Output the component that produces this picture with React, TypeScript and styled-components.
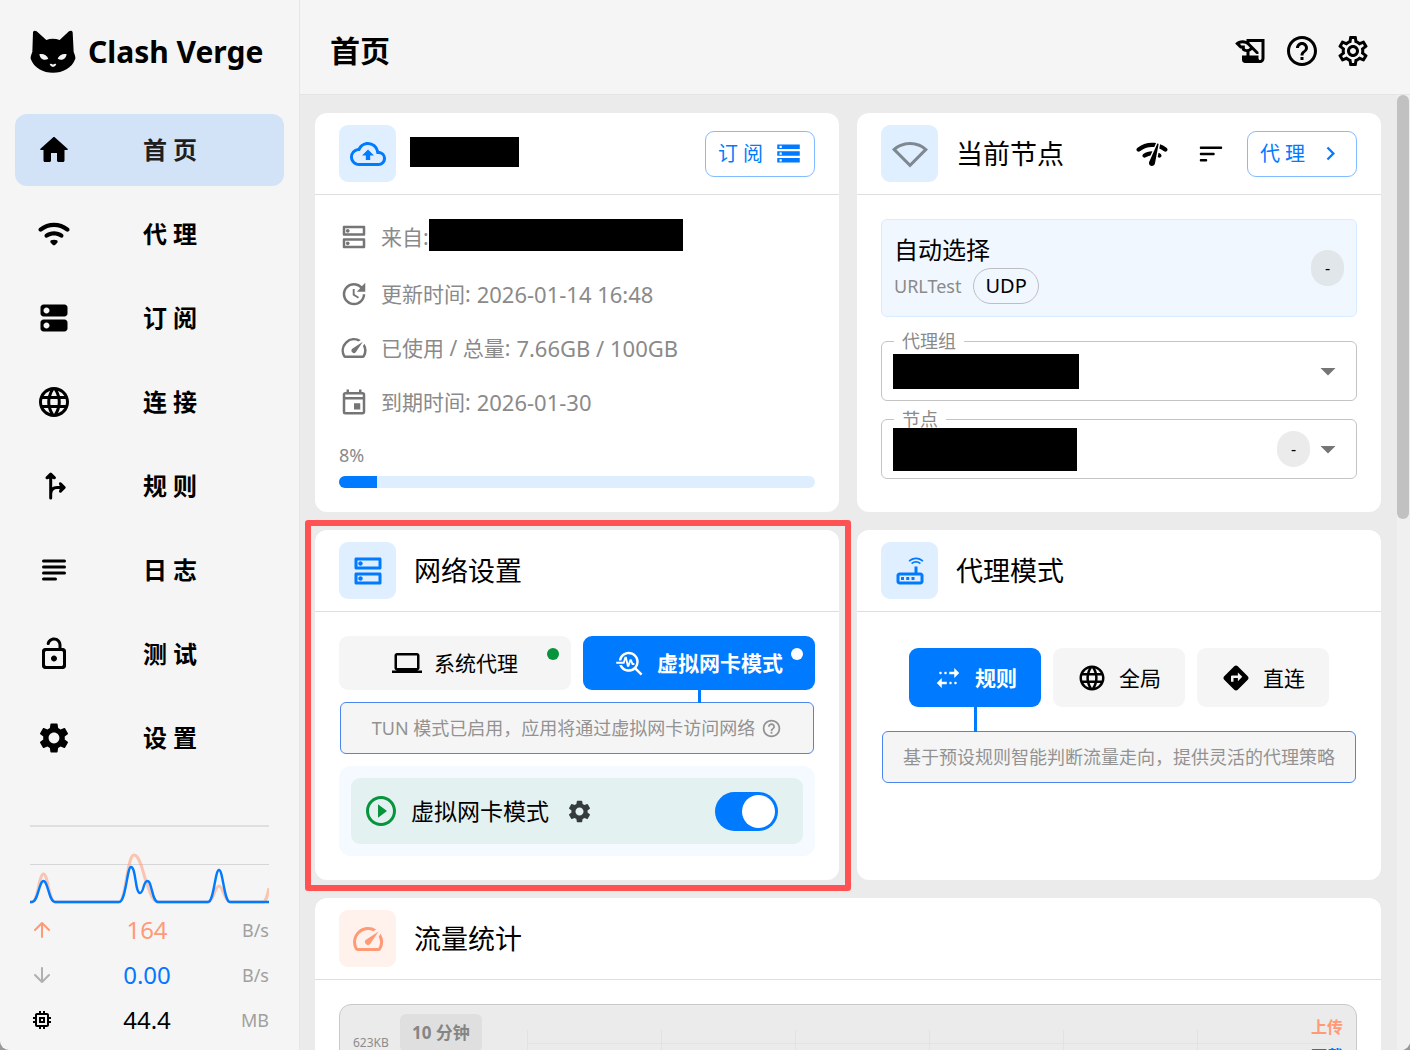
import React from "react";
import styled, { createGlobalStyle, css } from "styled-components";
import {
  MdArrowDropDown,
  MdChevronRight,
  MdDirections,
  MdHelpOutline,
  MdLanguage,
  MdMultipleStop,
  MdOutlineCloudUpload,
  MdOutlineDns,
  MdOutlineEvent,
  MdOutlineLaptop,
  MdOutlineMemory,
  MdOutlineRouter,
  MdOutlineSettings,
  MdPlayCircleOutline,
  MdSettings,
  MdSignalWifi0Bar,
  MdSpeed,
  MdStorage,
  MdTroubleshoot,
  MdUpdate,
} from "react-icons/md";

const color = {
  primary: "#007aff",
  upload: "#ff9a76",
  success: "#06943d",
  text: "#000000",
  muted: "#8a8a8a",
  panel: "#f5f5f5",
  page: "#ebebeb",
  divider: "#dedede",
};

const GlobalStyle = createGlobalStyle`
  *, *::before, *::after { box-sizing: border-box; }
  body {
    margin: 0;
    background: #9a9a9a;
    color: ${color.text};
    font-family: "Noto Sans", "Noto Sans CJK SC", sans-serif;
    font-size: 21px;
    line-height: 30px;
  }
  button, select, input { font: inherit; color: inherit; }
  button { cursor: pointer; }
  h1, h2, p, ul { margin: 0; padding: 0; }
  svg { display: block; flex-shrink: 0; }
`;

/* ---------- icons ---------- */

const Glyph = ({ size, d }: { size: number; d: string }) => (
  <svg width={size} height={size} viewBox="0 0 24 24" fill="currentColor" aria-hidden="true">
    <path d={d} />
  </svg>
);

const HomeIcon = () => (
  <Glyph
    size={36}
    d="M10 19v-5h4v5c0 .55.45 1 1 1h3c.55 0 1-.45 1-1v-7h1.7c.46 0 .68-.57.33-.87L12.67 3.6c-.38-.34-.96-.34-1.34 0l-8.36 7.53c-.34.3-.13.87.33.87H5v7c0 .55.45 1 1 1h3c.55 0 1-.45 1-1"
  />
);
const WifiIcon = () => (
  <Glyph
    size={36}
    d="M2.06 10.06c.51.51 1.32.56 1.87.1 4.67-3.84 11.45-3.84 16.13-.01.56.46 1.38.42 1.89-.09.59-.59.55-1.57-.1-2.1-5.71-4.67-13.97-4.67-19.69 0-.65.52-.7 1.5-.1 2.1m7.76 7.76 1.47 1.47c.39.39 1.02.39 1.41 0l1.47-1.47c.47-.47.37-1.28-.23-1.59-1.22-.63-2.68-.63-3.91 0-.57.31-.68 1.12-.21 1.59m-3.73-3.73c.49.49 1.26.54 1.83.13 2.44-1.73 5.72-1.73 8.16 0 .57.4 1.34.36 1.83-.13l.01-.01c.6-.6.56-1.62-.13-2.11-3.44-2.49-8.13-2.49-11.58 0-.69.5-.73 1.51-.12 2.12"
  />
);
const ServersIcon = () => (
  <Glyph
    size={36}
    d="M19 13H5c-1.1 0-2 .9-2 2v4c0 1.1.9 2 2 2h14c1.1 0 2-.9 2-2v-4c0-1.1-.9-2-2-2M7 19c-1.1 0-2-.9-2-2s.9-2 2-2 2 .9 2 2-.9 2-2 2M19 3H5c-1.1 0-2 .9-2 2v4c0 1.1.9 2 2 2h14c1.1 0 2-.9 2-2V5c0-1.1-.9-2-2-2M7 9c-1.1 0-2-.9-2-2s.9-2 2-2 2 .9 2 2-.9 2-2 2"
  />
);
const UnlockIcon = () => (
  <Glyph
    size={36}
    d="M18 8h-1V6c0-2.76-2.24-5-5-5-2.28 0-4.27 1.54-4.84 3.75-.14.54.18 1.08.72 1.22.53.14 1.08-.18 1.22-.72C9.44 3.93 10.63 3 12 3c1.65 0 3 1.35 3 3v2H6c-1.1 0-2 .9-2 2v10c0 1.1.9 2 2 2h12c1.1 0 2-.9 2-2V10c0-1.1-.9-2-2-2m0 11c0 .55-.45 1-1 1H7c-.55 0-1-.45-1-1v-8c0-.55.45-1 1-1h10c.55 0 1 .45 1 1zm-6-2c1.1 0 2-.9 2-2s-.9-2-2-2-2 .9-2 2 .9 2 2 2"
  />
);
const QuillIcon = () => (
  <Glyph
    size={36}
    d="M9 4v1.38c-.83-.33-1.72-.5-2.61-.5-1.79 0-3.58.68-4.95 2.05l3.33 3.33h1.11v1.11c.86.86 1.98 1.31 3.11 1.36V15H6v3c0 1.100.9 2 2 2h10c1.660 0 3-1.340 3-3V4zm-1.110 6.410V8.260H5.610L4.570 7.220a5.070 5.070 0 0 1 1.820-.34c1.340 0 2.590.52 3.540 1.460l1.410 1.410-.2.2c-.51.51-1.190.8-1.920.8-.47 0-.93-.12-1.330-.34M19 17c0 .55-.45 1-1 1s-1-.45-1-1v-2h-6v-2.590c.57-.23 1.100-.57 1.560-1.030l.2-.2L15.590 14H17v-1.410l-6-5.970V6h8z"
  />
);
const NetworkCheckIcon = () => (
  <Glyph
    size={36}
    d="M15.9 5c-.17 0-.32.09-.41.23l-.07.15-5.18 11.65c-.16.29-.26.61-.26.96 0 1.11.9 2.01 2.01 2.01.96 0 1.77-.68 1.96-1.59l.01-.03L16.4 5.5c0-.28-.22-.5-.5-.5M2.06 10.06c.51.51 1.33.55 1.89.09 2.76-2.26 6.24-3.18 9.58-2.76l1.19-2.68c-4.35-.78-8.96.3-12.57 3.25-.64.53-.68 1.51-.09 2.1m19.88 0c.59-.59.55-1.57-.1-2.1-1.36-1.11-2.86-1.95-4.44-2.53l-.53 2.82c1.13.47 2.19 1.09 3.17 1.89.58.46 1.39.43 1.9-.08m-4.01 4.01c.6-.6.56-1.62-.13-2.12-.46-.33-.95-.61-1.44-.86l-.55 2.92c.11.07.22.14.32.22.57.4 1.33.32 1.8-.16m-11.86 0c.47.47 1.2.54 1.77.16.98-.65 2.05-1.06 3.16-1.22l1.28-2.88c-2.13-.06-4.28.54-6.09 1.84-.69.51-.74 1.53-.12 2.1"
  />
);
const SortIcon = () => (
  <Glyph
    size={30}
    d="M4 18h4c.55 0 1-.45 1-1s-.45-1-1-1H4c-.55 0-1 .45-1 1s.45 1 1 1M3 7c0 .55.45 1 1 1h16c.55 0 1-.45 1-1s-.45-1-1-1H4c-.55 0-1 .45-1 1m1 6h10c.55 0 1-.45 1-1s-.45-1-1-1H4c-.55 0-1 .45-1 1s.45 1 1 1"
  />
);

const LineGlyph = ({ size, d }: { size: number; d: string }) => (
  <svg
    width={size}
    height={size}
    viewBox="0 0 24 24"
    fill="none"
    stroke="currentColor"
    strokeWidth={2}
    strokeLinecap="round"
    strokeLinejoin="round"
    aria-hidden="true"
  >
    <path d={d} />
  </svg>
);
const ForkIcon = () => (
  <LineGlyph
    size={36}
    d="M9.8 20V5M7.300 6.500l2.500-2.500 2.500 2.500-2.500-1zM9.8 17c.3-2.800 1.800-4 4.200-4H18M16.300 10.500l2.500 2.500-2.500 2.500 1-2.500z"
  />
);
const LinesIcon = () => <LineGlyph size={36} d="M5 6h14M5 10h14M5 14h14M5 18h8" />;
const ArrowUpIcon = () => <LineGlyph size={24} d="M12 19V5M5 12l7-7 7 7" />;
const ArrowDownIcon = () => <LineGlyph size={24} d="M12 5v14M5 12l7 7 7-7" />;

const CatLogo = () => (
  <svg width="46" height="44" viewBox="90 94 138 132" aria-hidden="true">
    <path d="M99 101Q101 94 110 98L139 124Q158 116 179 124L207 98Q216 94 218 101L221 160Q227 174 226 180C216 208 188 222 159 222S102 208 92 180Q91 174 97 160Z" />
    <path
      fill="#f5f5f5"
      d="M118 167C128 164 141 169 145 180C136 187 121 184 118 167ZM200 167C190 164 177 169 173 180C182 187 197 184 200 167ZM149 196Q154 193 159 198Q164 193 169 196Q167 204 159 205Q151 204 149 196Z"
    />
  </svg>
);

/* ---------- shell ---------- */

const Shell = styled.div`
  display: grid;
  grid-template-columns: 300px minmax(0, 1fr);
  height: 100vh;
  overflow: hidden;
  background: ${color.panel};
  border-radius: 0 0 9px 9px;
`;

const Sidebar = styled.aside`
  display: flex;
  flex-direction: column;
  border-right: 1px solid #e6e6e6;
  min-height: 0;
`;

const Brand = styled.div`
  display: flex;
  align-items: center;
  gap: 12px;
  height: 114px;
  padding: 0 30px 10px;
  font-size: 30px;
  line-height: 42px;
  font-weight: 700;
  white-space: nowrap;
`;

const NavList = styled.ul`
  display: grid;
  gap: 12px;
  padding: 0 15px;
  list-style: none;
`;

const NavLink = styled.a<{ $active?: boolean }>`
  display: flex;
  align-items: center;
  height: 72px;
  padding: 0 16px 0 21px;
  border-radius: 12px;
  background: ${(p) => (p.$active ? "#d2e3f8" : "transparent")};
  color: ${(p) => (p.$active ? "#1f1f1f" : color.text)};
  font-size: 24px;
  line-height: 32px;
  font-weight: 700;
  text-decoration: none;
  svg { color: ${color.text}; }
`;

const NavText = styled.span`
  flex: 1;
  text-align: center;
`;

const Traffic = styled.section`
  margin-top: auto;
  padding: 0 30px 8px;
`;

const TrafficGraph = styled.svg`
  width: 100%;
  height: 82px;
`;

const Stat = styled.div<{ $tone: string; $icon?: string }>`
  display: grid;
  grid-template-columns: 24px 1fr 29px;
  align-items: center;
  height: 45px;
  color: ${(p) => p.$tone};
  font-size: 24px;
  text-align: center;
  svg { color: ${(p) => p.$icon ?? p.$tone}; }
`;

const Unit = styled.span`
  color: #a0a0a0;
  font-size: 18px;
  text-align: right;
`;

const Main = styled.main`
  display: flex;
  flex-direction: column;
  min-width: 0;
  min-height: 0;
`;

const TopBar = styled.header`
  display: flex;
  align-items: center;
  justify-content: space-between;
  flex-shrink: 0;
  height: 95px;
  padding: 8px 39px 0 30px;
  border-bottom: 1px solid #e4e4e4;
`;

const PageTitle = styled.h1`
  font-size: 30px;
  line-height: 42px;
  font-weight: 700;
`;

const IconRow = styled.div<{ $gap: number }>`
  display: flex;
  align-items: center;
  gap: ${(p) => p.$gap}px;
`;

const IconButton = styled.button`
  display: grid;
  place-items: center;
  padding: 0;
  border: 0;
  background: none;
`;

const Viewport = styled.div`
  display: flex;
  flex: 1;
  min-height: 0;
  overflow: hidden;
  background: ${color.page};
`;

const Board = styled.div`
  display: grid;
  flex: 1;
  grid-template-columns: repeat(2, minmax(0, 1fr));
  align-content: start;
  gap: 18px;
  min-width: 0;
  padding: 18px 16px 18px 15px;
`;

const ScrollTrack = styled.div`
  flex: 0 0 13px;
  padding-right: 1px;
  background: #f0f0f0;
`;

const ScrollThumb = styled.div`
  height: 424px;
  border-radius: 6px;
  background: #c1c1c1;
`;

/* ---------- cards ---------- */

const Card = styled.section<{ $wide?: boolean }>`
  position: relative;
  grid-column: ${(p) => (p.$wide ? "1 / -1" : "auto")};
  border-radius: 12px;
  background: #ffffff;
`;

const CardHead = styled.div`
  display: flex;
  align-items: center;
  gap: 18px;
  height: 82px;
  padding: 0 24px;
  border-bottom: 1px solid ${color.divider};
`;

const Badge = styled.div<{ $tone?: "upload" | "idle" }>`
  display: grid;
  place-items: center;
  flex-shrink: 0;
  width: 57px;
  height: 57px;
  border-radius: 9px;
  background: ${(p) => (p.$tone === "upload" ? "#fff1ec" : "#e0efff")};
  color: ${(p) => (p.$tone === "upload" ? color.upload : p.$tone === "idle" ? "#7f8791" : color.primary)};
`;

const CardTitle = styled.h2`
  flex: 1;
  font-size: 27px;
  line-height: 36px;
  font-weight: 400;
`;

const CardBody = styled.div<{ $top?: number }>`
  padding: ${(p) => p.$top ?? 24}px 24px 24px;
`;

const Redacted = styled.span<{ $w: number; $h: number }>`
  position: relative;
  display: block;
  width: ${(p) => p.$w}px;
  height: ${(p) => p.$h}px;
  background: #000000;
`;

const HeadSlot = styled.div`
  flex: 1;
  margin: 0 0 3px -4px;
`;

const OutlineButton = styled.button`
  display: flex;
  align-items: center;
  justify-content: center;
  gap: 12px;
  width: 110px;
  height: 46px;
  padding: 0;
  border: 1px solid #80bcff;
  border-radius: 9px;
  background: #ffffff;
  color: ${color.primary};
  font-size: 20px;
  white-space: nowrap;
`;

const InfoList = styled.div`
  display: grid;
  gap: 24px;
  color: ${color.muted};
`;

const InfoRow = styled.div<{ $tall?: boolean }>`
  display: flex;
  align-items: center;
  height: ${(p) => (p.$tall ? 36 : 30)}px;
  white-space: nowrap;
  svg {
    margin-right: 12px;
    color: #757575;
  }
  ${Redacted} { align-self: flex-start; }
`;

const InfoValue = styled.span`
  margin-left: 6px;
  font-size: 22px;
`;

const Usage = styled.div`
  display: grid;
  gap: 6px;
  font-size: 18px;
  line-height: 29px;
`;

const Meter = styled.div`
  height: 12px;
  border-radius: 6px;
  background: #deeeff;
  overflow: hidden;
`;

const MeterFill = styled.div`
  height: 100%;
  background: ${color.primary};
`;

/* ---------- current node ---------- */

const NodeBox = styled.div`
  display: flex;
  align-items: center;
  justify-content: space-between;
  margin-bottom: 24px;
  padding: 12px;
  border: 1px solid #d9ebff;
  border-radius: 6px;
  background: #f1f7ff;
`;

const NodeName = styled.p`
  font-size: 24px;
  line-height: 36px;
`;

const NodeMeta = styled.div`
  display: flex;
  align-items: center;
  gap: 12px;
  color: ${color.muted};
  font-size: 18px;
`;

const Pill = styled.span`
  height: 36px;
  padding: 0 11px;
  border: 1px solid #bdbdc4;
  border-radius: 18px;
  color: ${color.text};
  font-size: 20px;
  line-height: 34px;
`;

const Delay = styled.span<{ $bg: string }>`
  width: 33px;
  height: 36px;
  border-radius: 17px;
  background: ${(p) => p.$bg};
  color: ${color.text};
  font-size: 16px;
  line-height: 36px;
  text-align: center;
`;

const Field = styled.div`
  position: relative;
  display: flex;
  align-items: center;
  height: 60px;
  margin-bottom: 18px;
  padding: 0 10px 0 11px;
  border: 1px solid #c4c4c4;
  border-radius: 6px;
  &:last-child { margin-bottom: 8px; }
  svg { color: #757575; }
`;

const FieldLabel = styled.label`
  position: absolute;
  top: -13px;
  left: 12px;
  padding: 0 8px;
  background: #ffffff;
  color: ${color.muted};
  font-size: 18px;
  line-height: 24px;
`;

const FieldSelect = styled.select`
  position: absolute;
  inset: 0;
  width: 100%;
  border: 0;
  background: transparent;
  appearance: none;
`;

const FieldSpace = styled.span`
  flex: 1;
`;

/* ---------- toggles ---------- */

const Toggles = styled.div<{ $cols: string }>`
  display: grid;
  grid-template-columns: ${(p) => p.$cols};
  justify-content: center;
  gap: 12px;
`;

const Toggle = styled.button<{ $h: number; $link?: number }>`
  position: relative;
  display: flex;
  align-items: center;
  justify-content: center;
  gap: 12px;
  height: ${(p) => p.$h}px;
  padding: 0;
  border: 0;
  border-radius: 9px;
  background: ${color.panel};
  white-space: nowrap;
  ${(p) =>
    p.$link &&
    css`
      background: ${color.primary};
      color: #ffffff;
      font-weight: 700;
      &::after {
        content: "";
        position: absolute;
        z-index: 1;
        top: 100%;
        left: 50%;
        width: 3px;
        height: ${p.$link}px;
        margin-left: -1px;
        background: ${color.primary};
      }
    `}
`;

const StatusDot = styled.span<{ $tone: string }>`
  position: absolute;
  top: 12px;
  right: 12px;
  width: 12px;
  height: 12px;
  border-radius: 50%;
  background: ${(p) => p.$tone};
`;

const Hint = styled.div<{ $top: number }>`
  display: flex;
  align-items: center;
  justify-content: center;
  gap: 6px;
  height: 52px;
  margin: ${(p) => p.$top}px 1px 0;
  border: 1px solid #4a86ee;
  border-radius: 6px;
  background: ${color.panel};
  color: #929292;
  font-size: 18px;
  white-space: nowrap;
`;

const SwitchFrame = styled.div`
  margin-top: 12px;
  padding: 12px;
  border-radius: 12px;
  background: #f4faff;
`;

const SwitchRow = styled.div`
  display: flex;
  align-items: center;
  height: 66px;
  padding: 0 25px 0 12px;
  border-radius: 9px;
  background: #e3f1f1;
`;

const PlayMark = styled.span`
  margin-right: 12px;
  color: ${color.success};
`;

const SwitchLabel = styled.label`
  margin-right: 17px;
  font-size: 23px;
`;

const GearButton = styled(IconButton)`
  margin-right: auto;
  color: #353c3d;
`;

const Switch = styled.input`
  appearance: none;
  width: 63px;
  height: 39px;
  margin: 0;
  padding: 3px;
  border-radius: 20px;
  background: #c4c4c4;
  &::before {
    content: "";
    display: block;
    width: 33px;
    height: 33px;
    border-radius: 50%;
    background: #ffffff;
  }
  &:checked { background: ${color.primary}; }
  &:checked::before { margin-left: auto; }
`;

const Highlight = styled.div`
  position: absolute;
  inset: -10px -12px -11px -10px;
  border: 6px solid #ff5252;
  border-radius: 3px;
  pointer-events: none;
`;

/* ---------- traffic chart ---------- */

const Chart = styled.div`
  display: flex;
  height: 190px;
  padding: 9px 13px;
  border: 1px solid #c9c9c9;
  border-radius: 12px;
  background: #ebebeb;
`;

const AxisLabel = styled.span`
  width: 47px;
  padding-top: 20px;
  color: #8c8c8c;
  font-size: 12px;
  line-height: 18px;
`;

const RangeButton = styled.button`
  height: 38px;
  padding: 0 12px;
  border: 0;
  border-radius: 6px;
  background: #dfdfdf;
  color: #858585;
  font-size: 17px;
  font-weight: 700;
`;

const Grid = styled.div`
  display: grid;
  flex: 1;
  grid-template-columns: repeat(6, 1fr);
  margin: 16px -20px 0 45px;
`;

const GridCell = styled.span`
  border-left: 1px solid #e2e2e2;
  background: linear-gradient(#e4e4e4, #e4e4e4) 0 13px / 100% 1px no-repeat;
`;

const Legend = styled.div`
  display: grid;
  align-content: start;
  gap: 3px;
  color: ${color.upload};
  font-size: 16px;
  line-height: 26px;
  font-weight: 700;
`;

const LegendItem = styled.span<{ $tone: string }>`
  color: ${(p) => p.$tone};
`;

/* ---------- data ---------- */

const nav = [
  { label: "首 页", icon: <HomeIcon />, active: true },
  { label: "代 理", icon: <WifiIcon /> },
  { label: "订 阅", icon: <ServersIcon /> },
  { label: "连 接", icon: <MdLanguage size={36} /> },
  { label: "规 则", icon: <ForkIcon /> },
  { label: "日 志", icon: <LinesIcon /> },
  { label: "测 试", icon: <UnlockIcon /> },
  { label: "设 置", icon: <MdSettings size={36} /> },
];

const stats = [
  { icon: <ArrowUpIcon />, value: "164", unit: "B/s", tone: color.upload },
  { icon: <ArrowDownIcon />, value: "0.00", unit: "B/s", tone: color.primary, iconTone: "#b0b0b0" },
  { icon: <MdOutlineMemory size={24} />, value: "44.4", unit: "MB", tone: color.text },
];

const info = [
  { icon: <MdUpdate size={30} />, label: "更新时间:", value: "2026-01-14 16:48" },
  { icon: <MdSpeed size={30} />, label: "已使用 / 总量:", value: "7.66GB / 100GB" },
  { icon: <MdOutlineEvent size={30} />, label: "到期时间:", value: "2026-01-30" },
];

const usedPercent = 8;

export default function App() {
  return (
    <>
      <GlobalStyle />
      <Shell>
        <Sidebar>
          <Brand>
            <CatLogo />
            Clash Verge
          </Brand>
          <nav>
            <NavList>
              {nav.map((item) => (
                <li key={item.label}>
                  <NavLink href="#" $active={item.active}>
                    {item.icon}
                    <NavText>{item.label}</NavText>
                  </NavLink>
                </li>
              ))}
            </NavList>
          </nav>
          <Traffic>
            <TrafficGraph viewBox="0 0 239 82" preserveAspectRatio="none" fill="none" aria-hidden="true">
              <path d="M0 1h239" stroke="#dfdfdf" strokeWidth="2" />
              <path d="M0 39.5h239" stroke="#d6d6d6" />
              <path
                stroke={color.upload}
                strokeOpacity="0.55"
                strokeWidth="3"
                d="M0 77H2C8 77 9 49 13.5 49S19 77 25 77H89C96 77 97 30 104 30C110 30 113 48 116 56C119 64 122 77 128 77H178C183 77 185 61 189 61S195 77 200 77H233C236 77 237 72 239 63"
              />
              <path
                stroke={color.primary}
                strokeWidth="2.4"
                d="M0 77H2C8 77 9 56 13.5 56S19 77 25 77H89C96 77 97 42 101 42C106 42 105 68 110 68C114 68 113 56 117.5 56C122 56 122 77 128 77H178C184 77 185 45 189 45S194 77 200 77H239"
              />
            </TrafficGraph>
            {stats.map((s) => (
              <Stat key={s.value} $tone={s.tone} $icon={s.iconTone}>
                {s.icon}
                <span>{s.value}</span>
                <Unit>{s.unit}</Unit>
              </Stat>
            ))}
          </Traffic>
        </Sidebar>

        <Main>
          <TopBar>
            <PageTitle>首页</PageTitle>
            <IconRow $gap={15}>
              <IconButton aria-label="轻量模式"><QuillIcon /></IconButton>
              <IconButton aria-label="帮助"><MdHelpOutline size={36} /></IconButton>
              <IconButton aria-label="首页设置"><MdOutlineSettings size={36} /></IconButton>
            </IconRow>
          </TopBar>

          <Viewport>
            <Board>
              <Card>
                <CardHead>
                  <Badge><MdOutlineCloudUpload size={36} /></Badge>
                  <HeadSlot><Redacted $w={109} $h={30} /></HeadSlot>
                  <OutlineButton>订 阅<MdStorage size={27} /></OutlineButton>
                </CardHead>
                <CardBody>
                  <InfoList>
                    <InfoRow $tall>
                      <MdOutlineDns size={30} />
                      <span>来自:</span>
                      <Redacted $w={254} $h={32} />
                    </InfoRow>
                    {info.map((row) => (
                      <InfoRow key={row.label}>
                        {row.icon}
                        <span>{row.label}</span>
                        <InfoValue>{row.value}</InfoValue>
                      </InfoRow>
                    ))}
                    <Usage>
                      <span>{usedPercent}%</span>
                      <Meter role="progressbar" aria-valuenow={usedPercent}>
                        <MeterFill style={{ width: `${usedPercent}%` }} />
                      </Meter>
                    </Usage>
                  </InfoList>
                </CardBody>
              </Card>

              <Card>
                <CardHead>
                  <Badge $tone="idle"><MdSignalWifi0Bar size={36} /></Badge>
                  <CardTitle>当前节点</CardTitle>
                  <IconRow $gap={21}>
                    <IconRow $gap={26}>
                      <IconButton aria-label="延迟测试"><NetworkCheckIcon /></IconButton>
                      <IconButton aria-label="排序"><SortIcon /></IconButton>
                    </IconRow>
                    <OutlineButton>代 理<MdChevronRight size={27} /></OutlineButton>
                  </IconRow>
                </CardHead>
                <CardBody>
                  <NodeBox>
                    <div>
                      <NodeName>自动选择</NodeName>
                      <NodeMeta>URLTest<Pill>UDP</Pill></NodeMeta>
                    </div>
                    <Delay $bg="#e1e6eb">-</Delay>
                  </NodeBox>
                  <Field>
                    <FieldLabel htmlFor="group">代理组</FieldLabel>
                    <Redacted $w={186} $h={35} />
                    <FieldSpace />
                    <MdArrowDropDown size={36} />
                    <FieldSelect id="group" />
                  </Field>
                  <Field>
                    <FieldLabel htmlFor="node">节点</FieldLabel>
                    <Redacted $w={184} $h={43} />
                    <FieldSpace />
                    <Delay $bg="#ebebeb">-</Delay>
                    <MdArrowDropDown size={36} />
                    <FieldSelect id="node" />
                  </Field>
                </CardBody>
              </Card>

              <Card>
                <CardHead>
                  <Badge><MdOutlineDns size={36} /></Badge>
                  <CardTitle>网络设置</CardTitle>
                </CardHead>
                <CardBody>
                  <Toggles $cols="1fr 1fr">
                    <Toggle $h={54}>
                      <MdOutlineLaptop size={30} />系统代理
                      <StatusDot $tone={color.success} />
                    </Toggle>
                    <Toggle $h={54} $link={13}>
                      <MdTroubleshoot size={30} />虚拟网卡模式
                      <StatusDot $tone="#ffffff" />
                    </Toggle>
                  </Toggles>
                  <Hint $top={12}>
                    TUN 模式已启用，应用将通过虚拟网卡访问网络
                    <MdHelpOutline size={21} />
                  </Hint>
                  <SwitchFrame>
                    <SwitchRow>
                      <PlayMark><MdPlayCircleOutline size={36} /></PlayMark>
                      <SwitchLabel htmlFor="tun">虚拟网卡模式</SwitchLabel>
                      <GearButton aria-label="虚拟网卡设置"><MdSettings size={27} /></GearButton>
                      <Switch id="tun" type="checkbox" defaultChecked />
                    </SwitchRow>
                  </SwitchFrame>
                </CardBody>
                <Highlight />
              </Card>

              <Card>
                <CardHead>
                  <Badge><MdOutlineRouter size={36} /></Badge>
                  <CardTitle>代理模式</CardTitle>
                </CardHead>
                <CardBody $top={36}>
                  <Toggles $cols="repeat(3, 132px)">
                    <Toggle $h={59} $link={25}><MdMultipleStop size={30} />规则</Toggle>
                    <Toggle $h={59}><MdLanguage size={30} />全局</Toggle>
                    <Toggle $h={59}><MdDirections size={30} />直连</Toggle>
                  </Toggles>
                  <Hint $top={24}>基于预设规则智能判断流量走向，提供灵活的代理策略</Hint>
                </CardBody>
              </Card>

              <Card $wide>
                <CardHead>
                  <Badge $tone="upload"><MdSpeed size={36} /></Badge>
                  <CardTitle>流量统计</CardTitle>
                </CardHead>
                <CardBody>
                  <Chart>
                    <AxisLabel>623KB</AxisLabel>
                    <RangeButton>10 分钟</RangeButton>
                    <Grid>
                      {Array.from({ length: 6 }, (_, i) => <GridCell key={i} />)}
                    </Grid>
                    <Legend>
                      <LegendItem $tone={color.upload}>上传</LegendItem>
                      <LegendItem $tone={color.primary}>下载</LegendItem>
                    </Legend>
                  </Chart>
                </CardBody>
              </Card>
            </Board>
            <ScrollTrack><ScrollThumb /></ScrollTrack>
          </Viewport>
        </Main>
      </Shell>
    </>
  );
}
